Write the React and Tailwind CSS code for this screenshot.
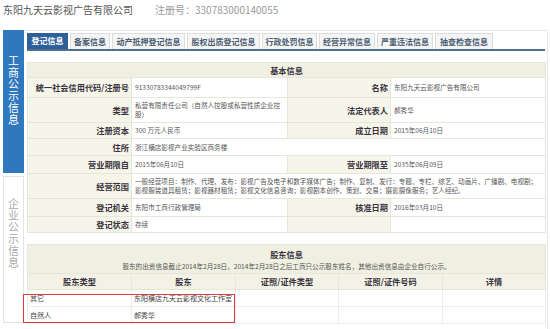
const TABS = [
  { name: "登记信息", w: "w-[41px]", active: true },
  { name: "备案信息", w: "w-[40px]" },
  { name: "动产抵押登记信息", w: "w-[73px]" },
  { name: "股权出质登记信息", w: "w-[73px]" },
  { name: "行政处罚信息", w: "w-[55px]" },
  { name: "经营异常信息", w: "w-[56px]" },
  { name: "严重违法信息", w: "w-[56px]" },
  { name: "抽查检查信息", w: "w-[58px]" },
];

function Label({ children, className = "" }) {
  return (
    <td
      className={
        "border border-[#e6e6da] bg-[#f5f5e9] pr-[2px] text-right text-[8.2px] font-bold text-[#3a3340] whitespace-nowrap " +
        className
      }
    >
      {children}
    </td>
  );
}

function Value({ children, colSpan, className = "" }) {
  return (
    <td
      colSpan={colSpan}
      className={
        "border border-[#e6e6da] bg-white pl-[3px] text-[6.6px] leading-[9px] text-[#555] " +
        className
      }
    >
      {children}
    </td>
  );
}

export default function App() {
  return (
    <div className="w-[550px] h-[329px] overflow-hidden bg-white relative font-['Noto_Sans_CJK_SC','Noto_Sans',sans-serif]">
      {/* title line */}
      <div className="h-[30px] pl-[3px] pt-[3px] flex text-[10px] leading-[13px]">
        <span className="text-[#555]">东阳九天云影视广告有限公司</span>
        <span className="ml-[22px] text-[#999]">注册号：330783000140055</span>
      </div>

      <div className="flex">
        {/* side column */}
        <div className="ml-[3px] w-[21px] flex flex-col">
          <div className="h-[143px] bg-[#2f78be] text-white text-[11px] leading-[11.7px] text-center pt-[25px]">
            工<br />商<br />公<br />示<br />信<br />息
          </div>
          <div className="mt-[3px] h-[147px] border border-[#e3e3e3] text-[#aaa] text-[11px] leading-[11.7px] text-center pt-[21px]">
            企<br />业<br />公<br />示<br />信<br />息
          </div>
        </div>

        {/* main panel */}
        <div className="w-[524px] h-[299px] border-t border-r border-[#e8e8e8] pl-[3px] pr-[2px] pt-[2px]">
          <div className="flex gap-[2px] h-[16px]">
            {TABS.map((t) =>
              t.active ? (
                <div
                  key={t.name}
                  className={t.w + " flex items-center justify-center bg-[#2d5f9c] text-white text-[8px] font-bold"}
                >
                  {t.name}
                </div>
              ) : (
                <div
                  key={t.name}
                  className={t.w + " flex items-center justify-center bg-[#f5f5f5] border border-b-0 border-[#dcdcdc] text-[#4b5d72] text-[8px] font-bold"}
                >
                  {t.name}
                </div>
              )
            )}
          </div>
          <div className="h-[2px] bg-[#50708c]" />

          {/* basic info */}
          <table className="mt-[11px] w-[518px] table-fixed border-collapse">
            <colgroup>
              <col className="w-[104px]" />
              <col className="w-[156px]" />
              <col className="w-[103px]" />
              <col className="w-[155px]" />
            </colgroup>
            <tbody>
              <tr className="h-[15px]">
                <td colSpan={4} className="border border-[#e6e6da] bg-[#f0f0e2] text-center text-[8.2px] font-bold text-[#3a3340]">
                  基本信息
                </td>
              </tr>
              <tr className="h-[20px]">
                <Label>统一社会信用代码/注册号</Label>
                <Value>91330783344049799F</Value>
                <Label>名称</Label>
                <Value>东阳九天云影视广告有限公司</Value>
              </tr>
              <tr className="h-[25px]">
                <Label>类型</Label>
                <Value>
                  私营有限责任公司（自然人控股或私营性质企业控
                  <br />
                  股）
                </Value>
                <Label>法定代表人</Label>
                <Value>郝秀华</Value>
              </tr>
              <tr className="h-[16px]">
                <Label>注册资本</Label>
                <Value>300 万元人民币</Value>
                <Label>成立日期</Label>
                <Value>2015年06月10日</Value>
              </tr>
              <tr className="h-[17px]">
                <Label>住所</Label>
                <Value colSpan={3}>浙江横店影视产业实验区商务楼</Value>
              </tr>
              <tr className="h-[18px]">
                <Label>营业期限自</Label>
                <Value>2015年06月10日</Value>
                <Label>营业期限至</Label>
                <Value>2035年06月09日</Value>
              </tr>
              <tr className="h-[25px]">
                <Label>经营范围</Label>
                <Value colSpan={3} className="whitespace-nowrap">
                  一般经营项目：制作、代理、发布：影视广告及电子和数字媒体广告；制作、复制、发行：专题、专栏、综艺、动画片、广播剧、电视剧；
                  <br />
                  影视服装道具租赁；影视器材租赁；影视文化信息咨询；影视剧本创作、策划、交易；摄影摄像服务；艺人经纪。
                </Value>
              </tr>
              <tr className="h-[18px]">
                <Label>登记机关</Label>
                <Value>东阳市工商行政管理局</Value>
                <Label>核准日期</Label>
                <Value>2016年03月10日</Value>
              </tr>
              <tr className="h-[16px]">
                <Label>登记状态</Label>
                <Value>存续</Value>
                <Label></Label>
                <Value></Value>
              </tr>
            </tbody>
          </table>

          {/* shareholders */}
          <div className="relative mt-[11px]">
            <table className="w-[518px] table-fixed border-collapse">
              <colgroup>
                <col className="w-[104px]" />
                <col className="w-[104px]" />
                <col className="w-[103px]" />
                <col className="w-[104px]" />
                <col className="w-[103px]" />
              </colgroup>
              <tbody>
                <tr className="h-[29px]">
                  <td colSpan={5} className="border border-[#e6e6da] bg-[#f0f0e2] text-center align-top pt-[3px]">
                    <div className="text-[8.2px] leading-[12px] font-bold text-[#3a3340]">股东信息</div>
                    <div className="text-[6.6px] leading-[10px] mt-[1px] text-[#555]">
                      股东的出资信息截止2014年2月28日。2014年2月28日之后工商只公示股东姓名，其他出资信息由企业自行公示。
                    </div>
                  </td>
                </tr>
                <tr className="h-[16px] bg-[#f2f2e6] text-center text-[8.2px] font-bold text-[#3a3340]">
                  <td className="border border-[#e6e6da]">股东类型</td>
                  <td className="border border-[#e6e6da]">股东</td>
                  <td className="border border-[#e6e6da]">证照/证件类型</td>
                  <td className="border border-[#e6e6da]">证照/证件号码</td>
                  <td className="border border-[#e6e6da]">详情</td>
                </tr>
                {[
                  ["其它", "东阳横店九天云影视文化工作室"],
                  ["自然人", "郝秀华"],
                ].map(([a, b]) => (
                  <tr key={a} className="h-[17px] text-[7px] text-[#444]">
                    <td className="border border-[#ececec] pl-[2px]">{a}</td>
                    <td className="border border-[#ececec] pl-[2px]">{b}</td>
                    <td className="border border-[#ececec]"></td>
                    <td className="border border-[#ececec]"></td>
                    <td className="border border-[#ececec]"></td>
                  </tr>
                ))}
              </tbody>
            </table>
            <div className="absolute left-[-4px] top-[50px] w-[212px] h-[29px] border-[1.5px] border-[#e23b3b]" />
          </div>
        </div>
      </div>
    </div>
  );
}
